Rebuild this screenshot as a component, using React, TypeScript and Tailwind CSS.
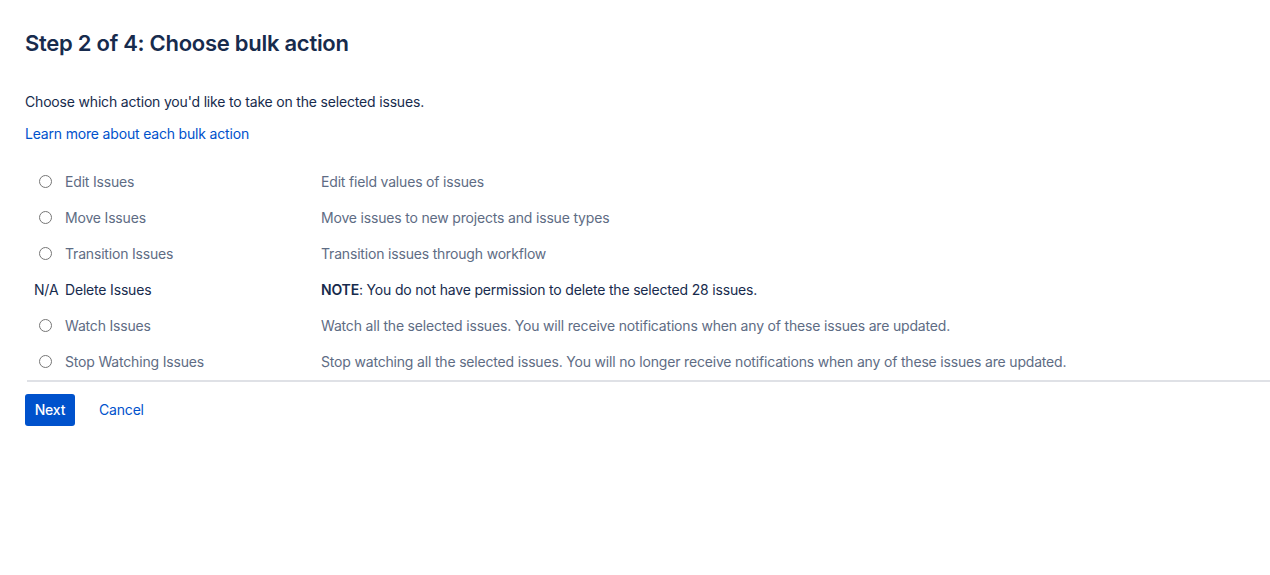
import React from "react";

const rows: { label: string; desc: React.ReactNode; na?: boolean }[] = [
  { label: "Edit Issues", desc: "Edit field values of issues" },
  { label: "Move Issues", desc: "Move issues to new projects and issue types" },
  { label: "Transition Issues", desc: "Transition issues through workflow" },
  {
    label: "Delete Issues",
    na: true,
    desc: (
      <>
        <b className="font-semibold">NOTE</b>: You do not have permission to delete the selected 28 issues.
      </>
    ),
  },
  {
    label: "Watch Issues",
    desc: "Watch all the selected issues. You will receive notifications when any of these issues are updated.",
  },
  {
    label: "Stop Watching Issues",
    desc: "Stop watching all the selected issues. You will no longer receive notifications when any of these issues are updated.",
  },
];

export default function App() {
  return (
    <div className="min-h-[575px] bg-white pl-[25px] pt-[29px] text-[14px] tracking-[-0.18px] text-[#172b4d]" style={{ fontFamily: "Inter, 'Noto Sans', sans-serif" }}>
      <h1 className="text-[22px] leading-[28px] font-semibold text-[#172b4d] tracking-[-0.27px]">Step 2 of 4: Choose bulk action</h1>
      <p className="mt-[35px] leading-[20px]">Choose which action you'd like to take on the selected issues.</p>
      <a className="mt-[12px] block leading-[20px] text-[#0052cc] w-fit" href="#">Learn more about each bulk action</a>
      <div className="mt-[20px] ml-[2px] border-b-2 border-[#dfe1e6]">
        {rows.map((r) => (
          <div key={r.label} className="flex h-[36px] items-center pb-[1px]">
            <div className="w-[38px] flex items-center">
              {r.na ? (
                <span className="pl-[7px] text-[#172b4d]">N/A</span>
              ) : (
                <span className="ml-[12px] block h-[13px] w-[13px] rounded-full border border-[#767676] bg-white" />
              )}
            </div>
            <div className={`w-[256px] ${r.na ? "text-[#172b4d]" : "text-[#5e6c84]"}`}>{r.label}</div>
            <div className={r.na ? "text-[#172b4d]" : "text-[#5e6c84]"}>{r.desc}</div>
          </div>
        ))}
      </div>
      <div className="mt-[12px] flex items-center">
        <button className="h-[32px] w-[50px] rounded-[3px] bg-[#0052cc] text-white font-medium pb-[1px]">Next</button>
        <a href="#" className="ml-[24px] text-[#0052cc] pb-[2px]">Cancel</a>
      </div>
    </div>
  );
}
